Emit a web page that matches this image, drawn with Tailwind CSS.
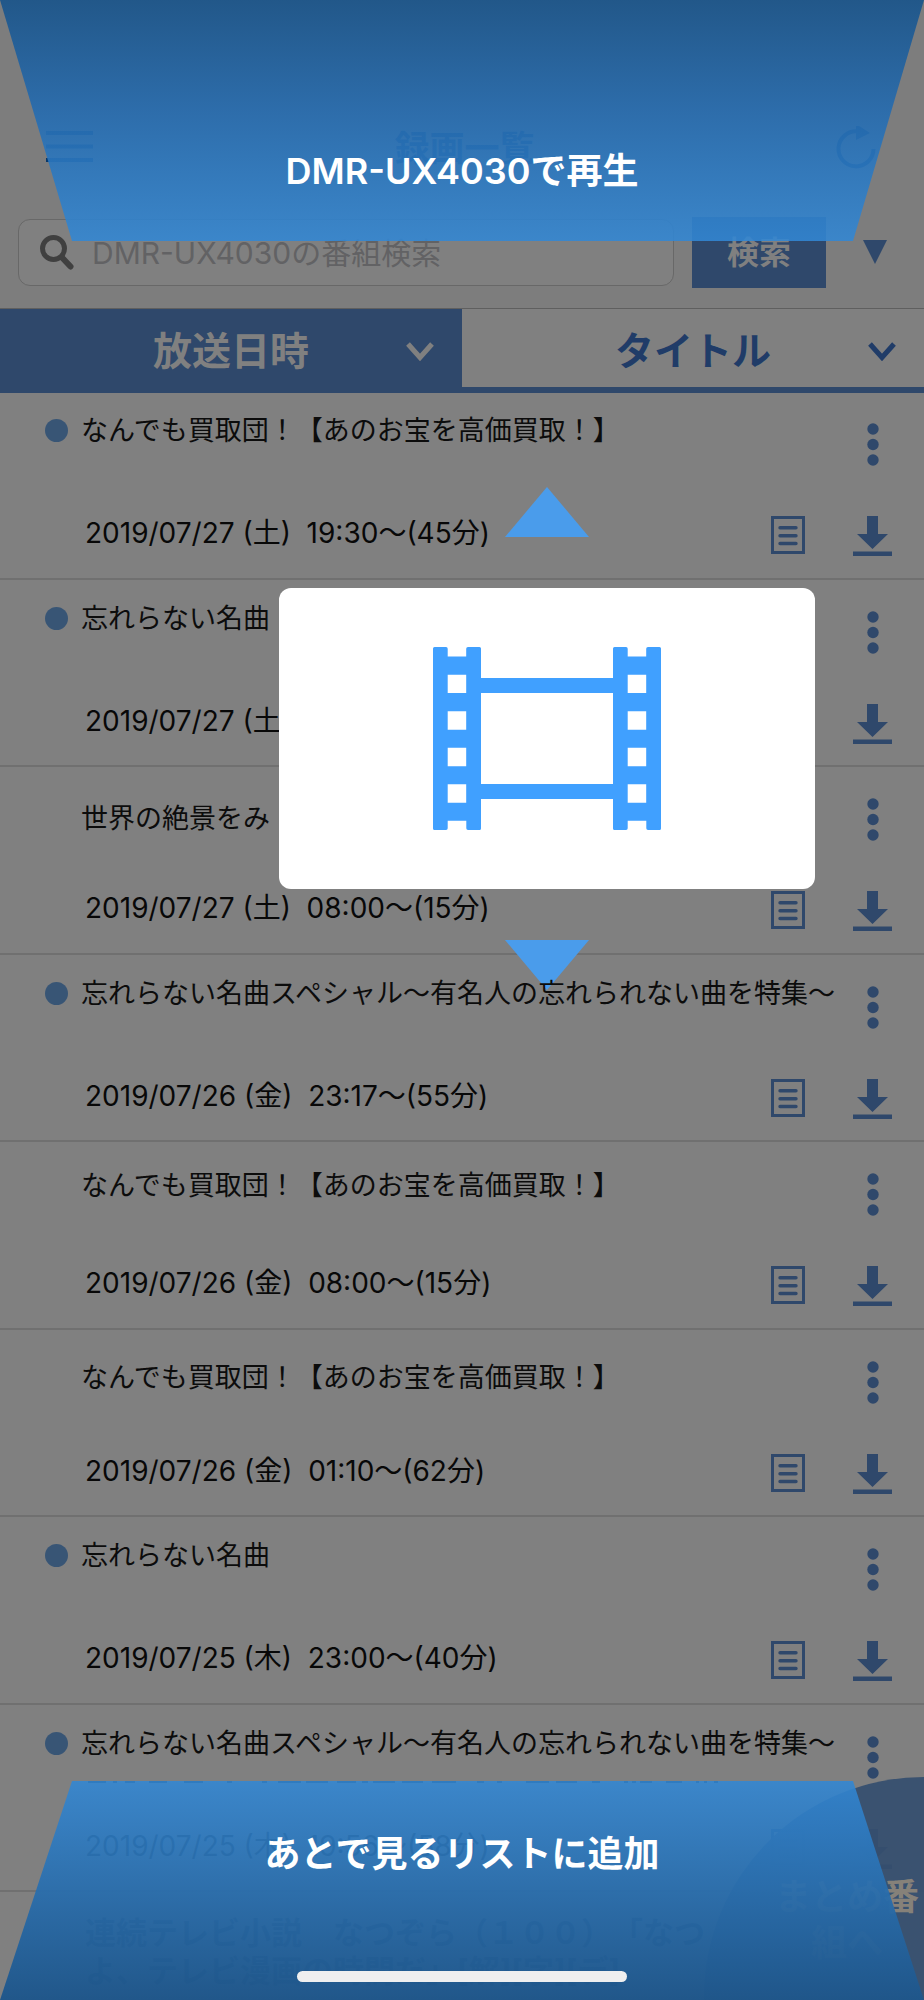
<!DOCTYPE html>
<html lang="ja">
<head>
<meta charset="utf-8">
<meta name="viewport" content="width=device-width, initial-scale=1">
<title>録画一覧</title>
<script src="https://cdn.jsdelivr.net/npm/@tailwindcss/browser@4"></script>
</head>
<body class="bg-[#808080]">
<svg class="hidden" aria-hidden="true">
  <symbol id="dots" viewBox="0 0 12 43"><circle cx="6" cy="6" r="5.7"/><circle cx="6" cy="21.5" r="5.7"/><circle cx="6" cy="37" r="5.7"/></symbol>
  <symbol id="doc" viewBox="0 0 34 38"><path fill="none" stroke="currentColor" stroke-width="3" d="M1.500 1.500h31v35h-31z"/><path fill="none" stroke="currentColor" stroke-width="3.400" stroke-linecap="round" d="M9 11.800h16M9 19.700h16M9 27.500h16"/></symbol>
  <symbol id="down" viewBox="0 0 39 40"><path d="M14 0h11v18h10L19.500 33 4 18h10zM0 35.500h39V40H0z"/></symbol>
  <symbol id="chev" viewBox="0 0 28 19"><path fill="none" stroke="currentColor" stroke-width="5" d="M2 2l12 13.500L26 2"/></symbol>
</svg>
<div class="relative h-screen overflow-hidden bg-[#808080] text-black [text-spacing-trim:space-all]" style="font-family: Inter, 'Noto Sans CJK JP', sans-serif">

  <header class="bg-[#7d7d7d]">
    <div class="flex h-[217px] items-start justify-between pt-[126px] pr-[48px] pl-[46px] text-[#08386b]">
      <button aria-label="メニュー" class="pt-[5px]"><svg class="h-[32px] w-[47px]" viewBox="0 0 47 32"><path fill="currentColor" d="M0 0h47v4H0zM0 13.500h47v4H0zM0 27h47v4H0z"/></svg></button>
      <h1 class="text-[35px] leading-[44px] font-bold">録画一覧</h1>
      <button aria-label="更新"><svg class="h-[44px] w-[40px]" viewBox="0 0 40 44"><path fill="none" stroke="currentColor" stroke-width="4" d="M22 5.500A17.500 17.500 0 1 0 37.500 23"/><path fill="currentColor" d="M20-2l14 9-14 7z"/></svg></button>
    </div>
    <form class="flex h-[91px] items-start pr-[37px] pl-[18px]" onsubmit="return false">
      <label class="mt-[2px] flex h-[67px] min-w-0 flex-1 items-center gap-[18px] rounded-xl border border-[#686868] bg-[#808080] pl-[21px]">
        <svg class="h-[35px] w-[34px] shrink-0 text-[#404040]" viewBox="0 0 34 35"><circle cx="13.500" cy="13.500" r="11" fill="none" stroke="currentColor" stroke-width="5"/><path stroke="currentColor" stroke-width="6" stroke-linecap="round" d="M22 22.500l8.500 9"/></svg>
        <input type="search" aria-label="番組検索" placeholder="DMR-UX4030の番組検索" class="min-w-0 flex-1 bg-transparent text-[30px] leading-10 outline-none placeholder:text-[#626264]">
      </label>
      <button class="ml-[18px] h-[71px] w-[134px] bg-[#2f486b] text-[32px] font-bold text-[#808080]">検索</button>
      <button type="button" aria-label="条件を開く" class="mt-[23px] ml-[37px]"><svg class="h-[24px] w-[24px] text-[#2f486b]" viewBox="0 0 24 24"><path fill="currentColor" d="M0 0h24L12 24z"/></svg></button>
    </form>
  </header>

  <nav class="grid h-[85px] grid-cols-2 border-t border-[#5f5f5f] text-[39px] font-bold">
    <button class="grid grid-cols-[1fr_auto_1fr] items-center bg-[#2f486b] text-[#808080]">
      <span class="col-start-2">放送日時</span><svg class="mr-[28px] h-[19px] w-[28px] justify-self-end"><use href="#chev"/></svg>
    </button>
    <button class="grid grid-cols-[1fr_auto_1fr] items-center border-b-6 border-[#2f486b] pt-[6px] text-[#203c68]">
      <span class="col-start-2">タイトル</span><svg class="mr-[28px] h-[19px] w-[28px] justify-self-end"><use href="#chev"/></svg>
    </button>
  </nav>

  <ul id="list" class="-mt-px grid h-[1500px] grid-cols-1 grid-rows-8"></ul>
  <div class="pt-[22px] pl-[85px] text-[31px] leading-[38px] font-bold text-[#1c2a38]">連続テレビ小説　なつぞら（１００）「なつ<br>よ、テレビ漫画の時間だ」[解][字][デ]</div>

  <!-- round shortcut in the bottom right corner -->
  <a href="#list" class="absolute -right-[220px] -bottom-[217px] h-[440px] w-[440px] rounded-full bg-[#364f6f]/95 pt-[97px] pr-[218px] pl-[64px] text-center text-[36px] leading-[46px] font-bold text-[#868179]">まとめ番<br>組へ</a>

  <!-- dragged programme card -->
  <div class="absolute top-[487px] right-[109px] left-[279px] flex flex-col items-center gap-[51px]">
    <svg class="h-[50px] w-[84px] text-[#4a9ceb]" viewBox="0 0 84 50"><path fill="currentColor" d="M42 0l42 50H0z"/></svg>
    <div class="relative z-20 flex h-[301px] w-full items-center justify-center rounded-xl bg-white">
      <svg class="h-[183px] w-[228px] text-[#40a0ff]" viewBox="0 0 228 183" fill="currentColor">
        <defs><path id="strip" fill-rule="evenodd" d="M1.500 0H13q1.700 0 1.700 1.700V9.500h18.500V1.700Q33.200 0 35 0H46.500Q48 0 48 1.500v180q0 1.500-1.500 1.500H35q-1.700 0-1.700-1.700v-7.500H14.700v7.500q0 1.700-1.700 1.700H1.500Q0 183 0 181.500V1.500Q0 0 1.500 0zM14.700 27.700V46h18.500V27.700zM14.700 64.300v18.500h18.500V64.300zM14.700 100.700v18.500h18.500v-18.500zM14.700 137.200v18.500h18.500v-18.500z"/></defs>
        <use href="#strip"/><use href="#strip" x="180"/><path d="M47 31h134v15H47zM47 137h134v15H47z"/>
      </svg>
    </div>
    <svg class="h-[50px] w-[84px] text-[#4a9ceb]" viewBox="0 0 84 50"><path fill="currentColor" d="M0 0h84L42 50z"/></svg>
  </div>

  <button class="absolute inset-x-0 top-0 z-20 h-[241px]">
    <svg class="absolute inset-0 h-full w-full" viewBox="0 0 924 241" preserveAspectRatio="none"><defs><linearGradient id="blue" x1="0" y1="0" x2="0" y2="1"><stop offset="0" stop-color="#1c558a" stop-opacity=".94"/><stop offset=".45" stop-color="#266bae" stop-opacity=".92"/><stop offset="1" stop-color="#3287d4" stop-opacity=".88"/></linearGradient></defs><path fill="url(#blue)" d="M0 0h924l-71 241H72z"/></svg>
    <span class="relative block pt-[101px] text-[36px] font-semibold text-white">DMR-UX4030で再生</span>
  </button>
  <button class="absolute inset-x-0 bottom-0 z-20 h-[219px]">
    <svg class="absolute inset-0 h-full w-full" viewBox="0 0 924 219" preserveAspectRatio="none"><defs><linearGradient id="blue2" x1="0" y1="1" x2="0" y2="0"><stop offset="0" stop-color="#1f568a" stop-opacity=".98"/><stop offset=".45" stop-color="#286ba9" stop-opacity=".95"/><stop offset="1" stop-color="#3287d4" stop-opacity=".88"/></linearGradient></defs><path fill="url(#blue2)" d="M0 219h924L853 0H72z"/></svg>
    <span class="relative block pb-[73px] text-[36px] font-bold text-white">あとで見るリストに追加</span>
  </button>
  <div class="absolute bottom-[18px] left-1/2 z-30 h-[11px] w-[330px] -translate-x-1/2 rounded-full bg-[#efefef]"></div>
</div>

<script>
const A = 'なんでも買取団！【あのお宝を高価買取！】', B = '忘れらない名曲', C = '忘れらない名曲スペシャル〜有名人の忘れられない曲を特集〜';
const rows = [
  [1, A, '2019/07/27 (土)&nbsp; 19:30〜(45分)', 'pt-[19px]'],
  [1, B, '2019/07/27 (土)', 'pt-[19px]'],
  [0, '世界の絶景をみ', '2019/07/27 (土)&nbsp; 08:00〜(15分)', 'pt-[32px]'],
  [1, C, '2019/07/26 (金)&nbsp; 23:17〜(55分)', 'pt-[19px]'],
  [0, A, '2019/07/26 (金)&nbsp; 08:00〜(15分)', 'pt-[24px]'],
  [0, A, '2019/07/26 (金)&nbsp; 01:10〜(62分)', 'pt-[28px]'],
  [1, B, '2019/07/25 (木)&nbsp; 23:00〜(40分)', 'pt-[19px]'],
  [1, C, '2019/07/25 (木)&nbsp; 19:56〜(58分)', 'pt-[19px]', 1]
];
// top edge of the clipped second title line
const clip = '<svg class="absolute top-[76px] left-[88px] h-[2px] w-[640px]" viewBox="0 0 640 2"><path stroke="#1c252e" stroke-width="2" d="M0 1h18M25 1h4M37 1h10M61 1h18M96 1h19M139 1h5M174 1h5M190 1h23M218 1h22M249 1h19M274 1h6M285 1h22M314 1h21M344 1h24M389 1h7M409 1h5M438 1h23M468 1h21M504 1h8M536 1h4M544 1h4M552 1h12M578 1h16M608 1h3M616 1h3M626 1h4"/></svg>';
document.getElementById('list').innerHTML = rows.map(([dot, t, d, pad, cut]) => `
<li class="relative flex min-h-0 border-b-2 border-[#707070] pr-[32px]">
  <div class="min-w-0 flex-1">
    <div class="flex h-[121px] items-start ${pad} pl-[45px]">
      <span class="mt-[8px] mr-[13px] h-[23px] w-[23px] shrink-0 rounded-full ${dot ? 'bg-[#385575]' : 'bg-transparent'}"></span>
      <h2 class="relative z-10 text-[27px] leading-10 font-normal whitespace-nowrap text-[#0c0c0c]">${t}</h2>
    </div>
    <p class="pl-[85px] text-[28px] leading-10 whitespace-nowrap text-[#080808]">${d}</p>
  </div>
  <button aria-label="番組内容" class="mt-[124px] mr-[48px] self-start text-[#2f486b]"><svg class="h-[38px] w-[34px]"><use href="#doc"/></svg></button>
  <div class="flex flex-col items-center gap-[50px] pt-[31px] text-[#2f486b]">
    <button aria-label="メニュー"><svg class="h-[43px] w-[12px] fill-current"><use href="#dots"/></svg></button>
    <button aria-label="ダウンロード"><svg class="h-[40px] w-[39px] fill-current"><use href="#down"/></svg></button>
  </div>${cut ? clip : ''}
</li>`).join('');
</script>
</body>
</html>
